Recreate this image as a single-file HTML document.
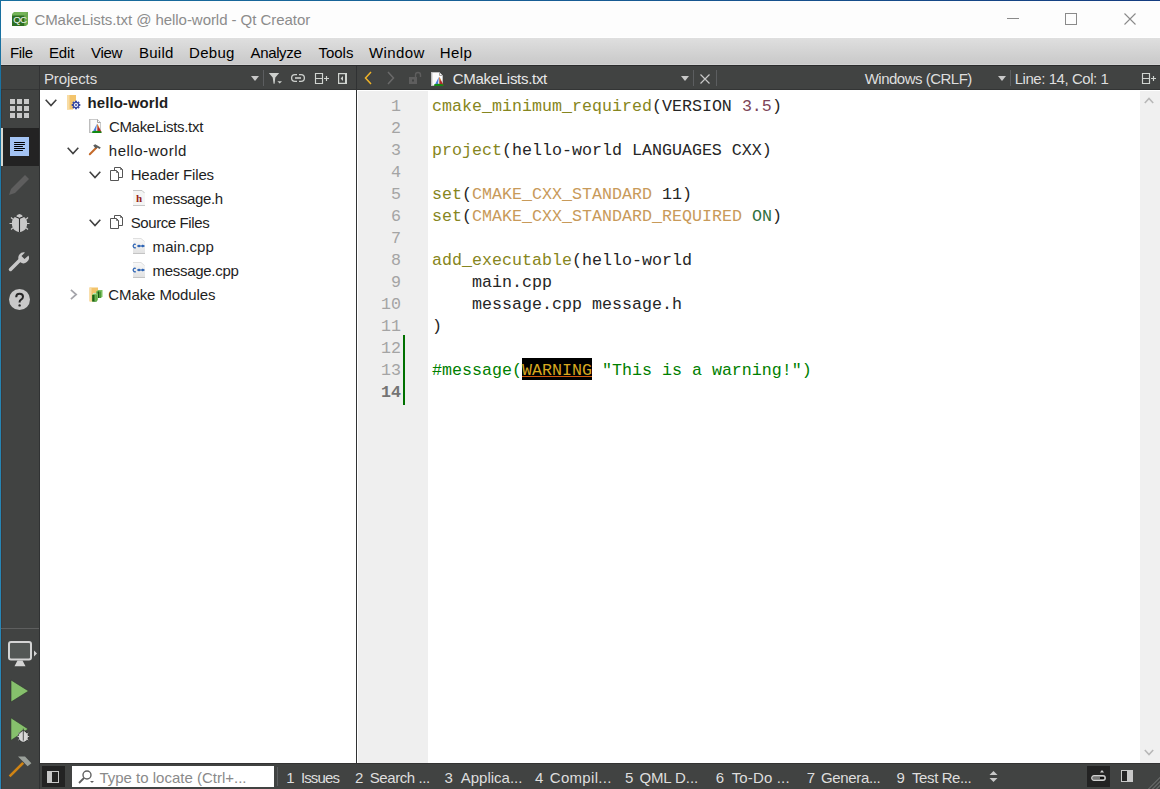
<!DOCTYPE html>
<html><head><meta charset="utf-8">
<style>
*{margin:0;padding:0;box-sizing:border-box}
html,body{width:1160px;height:789px;overflow:hidden;background:#fff;font-family:"Liberation Sans",sans-serif}
.a{position:absolute}
.t{position:absolute;white-space:pre;line-height:1;font-size:15px}
svg{position:absolute;overflow:visible}
#title{left:0;top:0;width:1160px;height:38px;background:#fdfdfd;border-bottom:1px solid #fff}
#menubar{left:0;top:38px;width:1160px;height:27px;background:linear-gradient(#dfdfdf,#c8c8c8)}
#menubar .t{color:#000;top:7px}
#tb{left:0;top:65px;width:1160px;height:25px;background:#414342;border-top:1px solid #2a2b2c;border-bottom:1px solid #333535}
#modebar{left:0;top:90px;width:40px;height:699px;background:#414342;border-right:1px solid #303233}
#tree{left:40px;top:90px;width:316px;height:673px;background:#fff}
#vsep{left:356px;top:66px;width:1px;height:697px;background:#303233}
#gutter{left:358px;top:91px;width:70px;height:672px;background:#efefef}
#editor{left:428px;top:90px;width:712px;height:673px;background:#fff}
#vscroll{left:1140px;top:91px;width:20px;height:672px;background:#f0f0f0}
#status{left:40px;top:763px;width:1120px;height:26px;background:#414342;border-top:1px solid #333}
.code{position:absolute;left:432px;font-family:"Liberation Mono",monospace;font-size:16.67px;white-space:pre;line-height:1;color:#262626}
.ln{position:absolute;left:340px;width:61px;text-align:right;font-family:"Liberation Mono",monospace;font-size:16.67px;white-space:pre;line-height:1;color:#a4a4a4}
.tr{color:#1e1e1e}
.ui{color:#dedede}
.fn{color:#868620}
.var{color:#c89a5a}
.num{color:#7c4458}
.cm{color:#008000}
</style></head><body>
<div class="a" id="title"></div>
<div class="a" style="left:0;top:0;width:1160px;height:1px;background:linear-gradient(to right,#176e9e,#175c94 50%,#143c80)"></div>
<!-- logo -->
<svg style="left:12px;top:12px" width="16" height="14" viewBox="0 0 16 14">
  <path d="M2 0H16V12L14 14H0V2Z" fill="#74b358"/>
  <path d="M0 3.5H12.5V14H0Z" fill="#2d6e21"/>
  <path d="M12.5 3.5L16 0V12L12.5 14Z" fill="#6aa84f"/>
  <text x="7.8" y="11.2" font-family="Liberation Sans" font-size="9.8" fill="#eef4ee" text-anchor="middle" letter-spacing="-0.8">QC</text>
</svg>
<span class="t" style="left:34.4px;top:12px;color:#8c8c8c;letter-spacing:-0.05px">CMakeLists.txt @ hello-world - Qt Creator</span>
<!-- window controls -->
<div class="a" style="left:1007px;top:18px;width:12px;height:1px;background:#8a8a8a"></div>
<div class="a" style="left:1065px;top:13px;width:12px;height:12px;border:1px solid #8a8a8a"></div>
<svg style="left:1124px;top:13px" width="12" height="12" viewBox="0 0 12 12"><path d="M0.5 0.5L11.5 11.5M11.5 0.5L0.5 11.5" stroke="#8a8a8a" stroke-width="1.1"/></svg>

<div class="a" id="menubar">
  <span class="t" style="left:10.0px;letter-spacing:-0.4px">File</span>
  <span class="t" style="left:49.0px;letter-spacing:-0.15px">Edit</span>
  <span class="t" style="left:91.0px;letter-spacing:-0.3px">View</span>
  <span class="t" style="left:139.0px;letter-spacing:0.25px">Build</span>
  <span class="t" style="left:189.0px;letter-spacing:0.3px">Debug</span>
  <span class="t" style="left:250.5px;letter-spacing:-0.35px">Analyze</span>
  <span class="t" style="left:318.4px;letter-spacing:0px">Tools</span>
  <span class="t" style="left:369.0px;letter-spacing:0.4px">Window</span>
  <span class="t" style="left:439.8px;letter-spacing:0.4px">Help</span>
</div>
<div class="a" style="left:0;top:64px;width:1160px;height:1px;background:#d2d2d2"></div>
<div class="a" id="tb"></div>
<div class="a" style="left:39px;top:66px;width:1px;height:24px;background:#323334"></div>
<span class="t ui" style="left:44px;top:71px;letter-spacing:-0.15px">Projects</span>
<!-- panel toolbar icons -->
<svg style="left:251px;top:76px" width="8" height="5"><path d="M0 0H8L4 5Z" fill="#c8c8c8"/></svg>
<div class="a" style="left:263px;top:70px;width:1px;height:16px;background:#5c5e60"></div>
<svg style="left:268px;top:73px" width="15" height="11" viewBox="0 0 15 11"><path d="M0.8 0H11.2L7.3 4.6L6.6 10.8H5.6L4.7 4.6Z" fill="#cdd0cd"/><path d="M9.4 8.2H14L11.7 10.4Z" fill="#cdd0cd"/></svg>
<svg style="left:290px;top:73px" width="16" height="10" viewBox="0 0 16 10"><path d="M7 1.6H5A3.4 3.4 0 0 0 5 8.4H7M9 1.6H11A3.4 3.4 0 0 1 11 8.4H9" fill="none" stroke="#cdd0cd" stroke-width="1.3"/><path d="M5 5H11" stroke="#cdd0cd" stroke-width="1.6"/></svg>
<svg style="left:314px;top:72px" width="16" height="13" viewBox="0 0 16 13"><path d="M1.5 1.5H8.5V11.5H1.5ZM1.5 6.5H8.5M10 6.5H15M12.5 4V9" fill="none" stroke="#d0d4d0" stroke-width="1.15"/></svg>
<svg style="left:338px;top:72px" width="10" height="13" viewBox="0 0 10 13"><path d="M0.6 1.6H8.4V11.4H0.6Z" fill="none" stroke="#d0d4d0" stroke-width="1.2"/><rect x="7" y="1" width="2" height="11" fill="#d0d4d0"/><path d="M5 4V9L2.6 6.5Z" fill="#d0d4d0"/></svg>
<!-- editor toolbar -->
<svg style="left:364px;top:71px" width="8" height="14" viewBox="0 0 8 14"><path d="M7 1L1.5 7L7 13" stroke="#f0b428" stroke-width="1.5" fill="none"/></svg>
<svg style="left:387px;top:71px" width="8" height="14" viewBox="0 0 8 14"><path d="M1 1L6.5 7L1 13" stroke="#6a6a6a" stroke-width="1.5" fill="none"/></svg>
<svg style="left:409px;top:72px" width="13" height="13" viewBox="0 0 13 13"><rect x="0" y="5" width="8" height="7" fill="#5e5e5e"/><rect x="3" y="7.5" width="2" height="2" fill="#414342"/><path d="M6.5 5.5V3A2.5 2.5 0 0 1 11.5 3V5" stroke="#5e5e5e" stroke-width="1.4" fill="none"/></svg>
<svg style="left:428px;top:69px" width="20" height="20" viewBox="0 0 20 20">
  <path d="M3.5 3.5H11.5L14.5 6.5V16.5H3.5Z" fill="#fbfbfb" stroke="#c4c4c4" stroke-width="0.9"/>
  <rect x="3" y="3" width="1.4" height="14" fill="#bdbdbd"/>
  <path d="M11.5 3.5V6.5H14.5" fill="none" stroke="#9a9a9a" stroke-width="0.9"/>
  <path d="M11 7.8L6.6 16.2H9.8Z" fill="#4a7fdc"/>
  <path d="M11.2 7.8L15.8 16.6H11.4Z" fill="#b02c2c"/>
  <path d="M11.1 7.8L11.6 12L13 11Z" fill="#e39a3a"/>
  <path d="M6.2 15.2Q11 14 15.4 15.6V17H6.2Z" fill="#128a12"/>
</svg>
<span class="t ui" style="left:452.8px;top:71px;color:#e8e8e8;letter-spacing:-0.3px">CMakeLists.txt</span>
<svg style="left:681px;top:76px" width="8" height="5"><path d="M0 0H8L4 5Z" fill="#c8c8c8"/></svg>
<div class="a" style="left:693px;top:70px;width:1px;height:16px;background:#5c5e60"></div>
<svg style="left:700px;top:74px" width="10" height="10" viewBox="0 0 10 10"><path d="M0.5 0.5L9.5 9.5M9.5 0.5L0.5 9.5" stroke="#c8c8c8" stroke-width="1.2"/></svg>
<div class="a" style="left:716px;top:70px;width:1px;height:16px;background:#5c5e60"></div>
<span class="t ui" style="left:864.7px;top:71px;letter-spacing:-0.5px">Windows (CRLF)</span>
<svg style="left:998px;top:76px" width="8" height="5"><path d="M0 0H8L4 5Z" fill="#c8c8c8"/></svg>
<div class="a" style="left:1010px;top:70px;width:1px;height:16px;background:#5c5e60"></div>
<span class="t ui" style="left:1014.7px;top:71px;letter-spacing:-0.45px">Line: 14, Col: 1</span>
<svg style="left:1141px;top:72px" width="20" height="13" viewBox="0 0 20 13"><path d="M1.5 1.5H8.5V11.5H1.5ZM1.5 6.5H8.5M10 6.5H15M12.5 4V9" fill="none" stroke="#d0d4d0" stroke-width="1.15"/></svg>

<div class="a" id="modebar"></div>
<div class="a" style="left:1px;top:90px;width:1px;height:699px;background:#3c3a3a"></div>
<!-- mode icons -->
<svg style="left:10px;top:99px" width="19" height="19" viewBox="0 0 19 19" fill="#c8c8c8">
  <rect x="0" y="0" width="5" height="5"/><rect x="7" y="0" width="5" height="5"/><rect x="14" y="0" width="5" height="5"/>
  <rect x="0" y="7" width="5" height="5"/><rect x="7" y="7" width="5" height="5"/><rect x="14" y="7" width="5" height="5"/>
  <rect x="0" y="14" width="5" height="5"/><rect x="7" y="14" width="5" height="5"/><rect x="14" y="14" width="5" height="5"/>
</svg>
<div class="a" style="left:2px;top:128px;width:37px;height:38px;background:#232323"></div>
<div class="a" style="left:1px;top:128px;width:2px;height:38px;background:#d8d8d0"></div>
<svg style="left:10px;top:137px" width="19" height="19" viewBox="0 0 19 19">
  <rect x="0" y="0" width="19" height="19" fill="#a4c4f4"/>
  <path d="M4.5 5.5H14.5M4.5 7.5H14.5M4.5 9.5H12.5M4.5 11.5H14.5M4.5 13.5H12.5" stroke="#000" stroke-width="1" stroke-linecap="round"/>
</svg>
<svg style="left:9px;top:175px" width="21" height="20" viewBox="0 0 21 20"><path d="M16 0L20 4L6 18L0 20L2 14Z" fill="#5e5e5e"/></svg>
<svg style="left:4px;top:206px" width="32" height="32" viewBox="0 0 32 32" fill="#c8c8c8">
  <path d="M11.8 10.6Q15.5 5.2 19.2 10.6L15.5 12.2Z"/>
  <path d="M15.5 12.4L11.6 10.6Q8 12.5 7.8 17.5Q8 23.5 13 25.5L15.5 26.2L18 25.5Q23 23.5 23.2 17.5Q23 12.5 19.4 10.6Z"/>
  <path d="M15.5 12.4V26.2M11.2 10.4L15.5 12.4L19.8 10.4" stroke="#2a2b2c" stroke-width="1.1" fill="none"/>
  <path d="M5.5 17.5H8.5M25.5 17.5H22.5M7 11.5L9 13.2M24 11.5L22 13.2M7 23.5L9 21.8M24 23.5L22 21.8" stroke="#c8c8c8" stroke-width="1.2"/>
</svg>
<svg style="left:9px;top:251px" width="21" height="20" viewBox="0 0 21 20"><path d="M1.5 18.5L11 9" stroke="#c8c8c8" stroke-width="3.5" stroke-linecap="round"/><path d="M10 9.5A5.5 5.5 0 0 1 16 1.5L12.5 5L15.5 8L19.5 4.5A5.5 5.5 0 0 1 11 11Z" fill="#c8c8c8"/></svg>
<svg style="left:9px;top:289px" width="21" height="21" viewBox="0 0 21 21"><circle cx="10.5" cy="10.5" r="10.5" fill="#c8c8c8"/><path d="M7.2 8.2Q7.2 4.8 10.6 4.8Q14 4.8 14 7.8Q14 9.6 11.8 10.8Q10.6 11.5 10.6 13V13.6" fill="none" stroke="#262626" stroke-width="2"/><circle cx="10.6" cy="16.4" r="1.2" fill="#262626"/></svg>
<div class="a" style="left:1px;top:628px;width:38px;height:1px;background:#5e5f5f"></div>
<svg style="left:8px;top:641px" width="30" height="26" viewBox="0 0 30 26">
  <rect x="1" y="1" width="22" height="17.6" rx="2" fill="#535755" stroke="#d4d4d4" stroke-width="2"/>
  <path d="M9.5 19.5H14.5L17.5 25.2H6.5Z" fill="#d4d4d4"/>
  <path d="M26 9.6V15.4L29 12.5Z" fill="#d4d4d4"/>
</svg>
<svg style="left:11px;top:680px" width="18" height="23" viewBox="0 0 18 23"><path d="M0 0L17.6 11L0 22Z" fill="#86c06c" stroke="#2c302c" stroke-width="0.6"/></svg>
<svg style="left:2px;top:712px" width="38" height="70" viewBox="0 0 38 70">
  <path d="M8.9 5.8L26.2 17L8.9 28.4Z" fill="#86c06c" stroke="#2c302c" stroke-width="0.6"/>
  <g transform="translate(21.3 23.5) scale(0.58) translate(-15.5 -15.7)" fill="#2e3030" stroke="#2e3030" stroke-width="3"><path d="M11.8 10.6Q15.5 5.2 19.2 10.6L15.5 12.2Z"/>
  <path d="M15.5 12.4L11.6 10.6Q8 12.5 7.8 17.5Q8 23.5 13 25.5L15.5 26.2L18 25.5Q23 23.5 23.2 17.5Q23 12.5 19.4 10.6Z"/>
  <path d="M5.5 17.5H8.5M25.5 17.5H22.5M7 11.5L9 13.2M24 11.5L22 13.2M7 23.5L9 21.8M24 23.5L22 21.8" stroke-width="1.6"/></g>
  <g transform="translate(21.3 23.5) scale(0.58) translate(-15.5 -15.7)" fill="#d8d8d8" stroke="#d8d8d8"><path d="M11.8 10.6Q15.5 5.2 19.2 10.6L15.5 12.2Z"/>
  <path d="M15.5 12.4L11.6 10.6Q8 12.5 7.8 17.5Q8 23.5 13 25.5L15.5 26.2L18 25.5Q23 23.5 23.2 17.5Q23 12.5 19.4 10.6Z"/>
  <path d="M5.5 17.5H8.5M25.5 17.5H22.5M7 11.5L9 13.2M24 11.5L22 13.2M7 23.5L9 21.8M24 23.5L22 21.8" stroke-width="1.6"/></g>
  <path d="M21.3 16.6V28.6" stroke="#2e3030" stroke-width="0.8"/>
  <path d="M7.6 64.4L21.2 50.8" stroke="#d08414" stroke-width="2.6"/>
  <path d="M16 44.6H23L29.4 51.3L25.6 54.2L21 49.6Z" fill="#9aa09a"/>
</svg>

<div class="a" id="tree"></div>
<!-- tree -->
<svg style="left:45px;top:99px" width="12" height="8" viewBox="0 0 12 8"><path d="M0.7 0.7L6 6.5L11.3 0.7" stroke="#404040" stroke-width="1.6" fill="none"/></svg>
<svg style="left:64px;top:92px" width="20" height="20" viewBox="0 0 20 20">
  <path d="M3 3H12V9.5H9V17.5H3Z" fill="#f3c46c"/><path d="M3 3H5.5V17.5H3Z" fill="#f8dca4"/>
  <g transform="translate(12,13)" fill="#3a4aa2">
    <rect x="-1" y="-4.3" width="2" height="8.6"/><rect x="-4.3" y="-1" width="8.6" height="2"/>
    <rect x="-1" y="-4.3" width="2" height="8.6" transform="rotate(45)"/><rect x="-1" y="-4.3" width="2" height="8.6" transform="rotate(-45)"/>
    <circle r="3.2"/><circle r="2" fill="#fff"/><circle r="1"/>
  </g>
</svg>
<span class="t tr" style="left:87.6px;top:95px;font-weight:bold;letter-spacing:0.05px">hello-world</span>
<svg style="left:86px;top:116px" width="20" height="20" viewBox="0 0 20 20">
  <path d="M3.5 3.5H11.5L14.5 6.5V16.5H3.5Z" fill="#fbfbfb" stroke="#c4c4c4" stroke-width="0.9"/>
  <rect x="3" y="3" width="1.4" height="14" fill="#bdbdbd"/>
  <path d="M11.5 3.5V6.5H14.5" fill="none" stroke="#9a9a9a" stroke-width="0.9"/>
  <path d="M11 7.8L6.6 16.2H9.8Z" fill="#4a7fdc"/>
  <path d="M11.2 7.8L15.8 16.6H11.4Z" fill="#b02c2c"/>
  <path d="M11.1 7.8L11.6 12L13 11Z" fill="#e39a3a"/>
  <path d="M6.2 15.2Q11 14 15.4 15.6V17H6.2Z" fill="#128a12"/>
</svg>
<span class="t tr" style="left:108.9px;top:119px;letter-spacing:-0.3px">CMakeLists.txt</span>
<svg style="left:67px;top:147px" width="12" height="8" viewBox="0 0 12 8"><path d="M0.7 0.7L6 6.5L11.3 0.7" stroke="#404040" stroke-width="1.6" fill="none"/></svg>
<svg style="left:88px;top:144px" width="14" height="12" viewBox="0 0 14 12"><path d="M1.8 10.2L8.5 3.5" stroke="#c46a2a" stroke-width="2" stroke-linecap="round"/><path d="M5.2 1.6L7.2 0.2L12.8 3.4L11.6 5L9 3.6L7.6 4.4Z" fill="#5a5e5e"/></svg>
<span class="t tr" style="left:108.8px;top:143px;letter-spacing:0.5px">hello-world</span>
<svg style="left:89px;top:171px" width="12" height="8" viewBox="0 0 12 8"><path d="M0.7 0.7L6 6.5L11.3 0.7" stroke="#404040" stroke-width="1.6" fill="none"/></svg>
<svg style="left:110px;top:167px" width="14" height="15" viewBox="0 0 14 15"><path d="M4.5 3.5V0.5H10.5L12.5 2.5V10.5H8.5" fill="none" stroke="#555" stroke-width="1"/><path d="M10.5 0.5V2.5H12.5" fill="none" stroke="#555" stroke-width="0.8"/><path d="M0.5 3.5H6.5L8.5 5.5V13.5H0.5Z" fill="#fff" stroke="#555" stroke-width="1"/><path d="M6.5 3.5V5.5H8.5" fill="none" stroke="#555" stroke-width="0.8"/></svg>
<span class="t tr" style="left:130.7px;top:167px;letter-spacing:-0.15px">Header Files</span>
<svg style="left:128px;top:186px" width="24" height="24" viewBox="0 0 24 24"><path d="M5 4H14L17 7V19.5H5Z" fill="#f4f5f4"/><path d="M5 4.5H14L16.5 7" fill="none" stroke="#c4c4c4" stroke-width="1"/><path d="M5 19.5H17" stroke="#c8c8c8" stroke-width="1"/><text x="8" y="16" font-family="Liberation Serif" font-weight="bold" font-size="11" fill="#9a2418">h</text></svg>
<span class="t tr" style="left:152.6px;top:191px;letter-spacing:-0.35px">message.h</span>
<svg style="left:89px;top:219px" width="12" height="8" viewBox="0 0 12 8"><path d="M0.7 0.7L6 6.5L11.3 0.7" stroke="#404040" stroke-width="1.6" fill="none"/></svg>
<svg style="left:110px;top:215px" width="14" height="15" viewBox="0 0 14 15"><path d="M4.5 3.5V0.5H10.5L12.5 2.5V10.5H8.5" fill="none" stroke="#555" stroke-width="1"/><path d="M10.5 0.5V2.5H12.5" fill="none" stroke="#555" stroke-width="0.8"/><path d="M0.5 3.5H6.5L8.5 5.5V13.5H0.5Z" fill="#fff" stroke="#555" stroke-width="1"/><path d="M6.5 3.5V5.5H8.5" fill="none" stroke="#555" stroke-width="0.8"/></svg>
<span class="t tr" style="left:130.7px;top:215px;letter-spacing:-0.4px">Source Files</span>
<svg style="left:128px;top:234px" width="24" height="24" viewBox="0 0 24 24"><defs><linearGradient id="pg234" x1="0" y1="0" x2="0" y2="1"><stop offset="0" stop-color="#fafafa"/><stop offset="1" stop-color="#e0e0e0"/></linearGradient></defs><path d="M5 4H13L17 7.5V20H5Z" fill="url(#pg234)"/><path d="M5 4.5H13L16.5 7.5" fill="none" stroke="#d8d8d8" stroke-width="0.8"/><path d="M5 19.5H17" stroke="#c4c4c4" stroke-width="1"/><path d="M7.8 10.6A1.7 1.7 0 1 0 7.8 13.4" fill="none" stroke="#2a62b4" stroke-width="1.2"/><path d="M9.2 12L11 10.4L12.8 12L11 13.6ZM13 12L14.8 10.4L16.6 12L14.8 13.6Z" fill="#2a62b4"/><path d="M9.2 12H16.6" stroke="#2a62b4" stroke-width="1"/></svg>
<span class="t tr" style="left:152.6px;top:239px;letter-spacing:0.05px">main.cpp</span>
<svg style="left:128px;top:258px" width="24" height="24" viewBox="0 0 24 24"><defs><linearGradient id="pg258" x1="0" y1="0" x2="0" y2="1"><stop offset="0" stop-color="#fafafa"/><stop offset="1" stop-color="#e0e0e0"/></linearGradient></defs><path d="M5 4H13L17 7.5V20H5Z" fill="url(#pg258)"/><path d="M5 4.5H13L16.5 7.5" fill="none" stroke="#d8d8d8" stroke-width="0.8"/><path d="M5 19.5H17" stroke="#c4c4c4" stroke-width="1"/><path d="M7.8 10.6A1.7 1.7 0 1 0 7.8 13.4" fill="none" stroke="#2a62b4" stroke-width="1.2"/><path d="M9.2 12L11 10.4L12.8 12L11 13.6ZM13 12L14.8 10.4L16.6 12L14.8 13.6Z" fill="#2a62b4"/><path d="M9.2 12H16.6" stroke="#2a62b4" stroke-width="1"/></svg>
<span class="t tr" style="left:152.6px;top:263px;letter-spacing:-0.3px">message.cpp</span>
<svg style="left:70px;top:289px" width="8" height="11" viewBox="0 0 8 11"><path d="M0.9 0.9L6.2 5.5L0.9 10.1" stroke="#a4a4aa" stroke-width="1.7" fill="none"/></svg>
<svg style="left:86px;top:284px" width="20" height="20" viewBox="0 0 20 20">
  <path d="M3.5 3.5H12V9H7V17.5H3.5Z" fill="#f3c46c"/><path d="M3.5 3.5H5.5V17H3.5Z" fill="#f8dca4"/>
  <path d="M10.5 7.5L12 6H16.5V12.5L15 14H10.5Z" fill="#7cc262"/><path d="M10.5 7.5H15V14H10.5Z" fill="#4f9a3c"/><path d="M12.5 7.5V14" stroke="#1f5a18" stroke-width="1"/>
  <path d="M6 11L7.5 9.5H12V16L10.5 17.5H6Z" fill="#7cc262"/><path d="M6 11H10.5V17.5H6Z" fill="#2f7a24"/><path d="M8 11V17.5" stroke="#134a10" stroke-width="1.2"/><path d="M8.5 11V17.5H10.5V11Z" fill="#6ab450"/>
</svg>
<span class="t tr" style="left:108.3px;top:287px;letter-spacing:-0.1px">CMake Modules</span>

<div class="a" id="gutter"></div>
<div class="a" id="editor"></div>
<div class="a" id="vscroll"></div>
<svg style="left:1144px;top:97px" width="10" height="7" viewBox="0 0 10 7"><path d="M0.8 6L5 1.5L9.2 6" stroke="#b8b8b8" stroke-width="1.6" fill="none"/></svg>
<svg style="left:1144px;top:749px" width="10" height="7" viewBox="0 0 10 7"><path d="M0.8 1L5 5.5L9.2 1" stroke="#b8b8b8" stroke-width="1.6" fill="none"/></svg>
<div class="a" id="vsep"></div>

<!-- line numbers -->
<div class="ln" style="top:99px">1</div>
<div class="ln" style="top:121px">2</div>
<div class="ln" style="top:143px">3</div>
<div class="ln" style="top:165px">4</div>
<div class="ln" style="top:187px">5</div>
<div class="ln" style="top:209px">6</div>
<div class="ln" style="top:231px">7</div>
<div class="ln" style="top:253px">8</div>
<div class="ln" style="top:275px">9</div>
<div class="ln" style="top:297px">10</div>
<div class="ln" style="top:319px">11</div>
<div class="ln" style="top:341px">12</div>
<div class="ln" style="top:363px">13</div>
<div class="ln" style="top:385px;font-weight:bold;color:#747474">14</div>
<div class="a" style="left:403px;top:335px;width:2px;height:70px;background:#007000"></div>

<!-- code -->
<div class="code" style="top:99px"><span class="fn">cmake_minimum_required</span>(VERSION <span class="num">3.5</span>)</div>
<div class="code" style="top:143px"><span class="fn">project</span>(hello-world LANGUAGES CXX)</div>
<div class="code" style="top:187px"><span class="fn">set</span>(<span class="var">CMAKE_CXX_STANDARD</span> 11)</div>
<div class="code" style="top:209px"><span class="fn">set</span>(<span class="var">CMAKE_CXX_STANDARD_REQUIRED</span> <span style="color:#2f7040">ON</span>)</div>
<div class="code" style="top:253px"><span class="fn">add_executable</span>(hello-world</div>
<div class="code" style="top:275px">    main.cpp</div>
<div class="code" style="top:297px">    message.cpp message.h</div>
<div class="code" style="top:319px">)</div>
<div class="a" style="left:522px;top:358px;width:70px;height:22px;background:#000"></div>
<div class="a" style="left:522px;top:376px;width:70px;height:1px;background:#d05a10"></div>
<div class="code cm" style="top:363px">#message(<span style="color:#d8a820">WARNING</span> "This is a warning!")</div>

<div class="a" id="status"></div>
<div class="a" style="left:39px;top:763px;width:1px;height:26px;background:#303233"></div>
<div class="a" style="left:42px;top:766px;width:23px;height:21px;background:#232323"></div>
<svg style="left:47px;top:771px" width="12" height="12" viewBox="0 0 12 12"><rect x="0.5" y="0.5" width="11" height="11" fill="#232323" stroke="#c8c8c8"/><rect x="0" y="0" width="5" height="12" fill="#c8c8c8"/></svg>
<div class="a" style="left:72px;top:766px;width:202px;height:21px;background:#fff"></div>
<svg style="left:78px;top:770px" width="17" height="14" viewBox="0 0 17 14"><circle cx="9" cy="5" r="4" fill="none" stroke="#606060" stroke-width="1.4"/><path d="M6 8L1 13" stroke="#606060" stroke-width="1.8"/><path d="M12 11H16L14 13Z" fill="#606060"/></svg>
<span class="t" style="left:99.4px;top:770px;color:#8a8a8a">Type to locate (Ctrl+...</span>
<div class="a" style="left:277px;top:767px;width:1px;height:19px;background:#5c5e60"></div>
<span class="t ui" style="left:286.2px;top:770px">1</span><span class="t ui" style="left:300.9px;top:770px;letter-spacing:-0.85px">Issues</span>
<span class="t ui" style="left:354.9px;top:770px">2</span><span class="t ui" style="left:369.7px;top:770px;letter-spacing:-0.4px">Search ...</span>
<span class="t ui" style="left:444.5px;top:770px">3</span><span class="t ui" style="left:460.7px;top:770px;letter-spacing:0px">Applica...</span>
<span class="t ui" style="left:535.0px;top:770px">4</span><span class="t ui" style="left:549.8px;top:770px;letter-spacing:0.3px">Compil...</span>
<span class="t ui" style="left:625.0px;top:770px">5</span><span class="t ui" style="left:639.4px;top:770px;letter-spacing:-0.1px">QML D...</span>
<span class="t ui" style="left:715.7px;top:770px">6</span><span class="t ui" style="left:731.7px;top:770px;letter-spacing:0.15px">To-Do ...</span>
<span class="t ui" style="left:806.8px;top:770px">7</span><span class="t ui" style="left:821px;top:770px;letter-spacing:-0.35px">Genera...</span>
<span class="t ui" style="left:896.5px;top:770px">9</span><span class="t ui" style="left:912px;top:770px;letter-spacing:-0.4px">Test Re...</span>
<svg style="left:989px;top:770px" width="9" height="13" viewBox="0 0 9 13"><path d="M0.5 5L4.5 1L8.5 5ZM0.5 8L4.5 12L8.5 8Z" fill="#c8c8c8"/></svg>
<div class="a" style="left:1087px;top:766px;width:23px;height:21px;background:#232323"></div>
<svg style="left:1091px;top:770px" width="15" height="11" viewBox="0 0 15 11"><path d="M9 2.5H13L11 0Z" fill="#d0d0d0"/><rect x="0.7" y="5.7" width="13.6" height="4.6" rx="2.3" fill="#777" stroke="#d0d0d0" stroke-width="1.2"/><rect x="9" y="7" width="4" height="2" fill="#111"/></svg>
<svg style="left:1121px;top:770px" width="12" height="12" viewBox="0 0 12 12"><rect x="0.5" y="0.5" width="11" height="11" fill="#232323" stroke="#c8c8c8"/><rect x="6" y="0" width="6" height="12" fill="#c8c8c8"/></svg>
<svg style="left:1140px;top:770px" width="20" height="19" viewBox="0 0 20 19"><path d="M8 19.5L20.5 7M12 19.5L20.5 11M16 19.5L20.5 15" stroke="#5e605f" stroke-width="1" shape-rendering="crispEdges"/></svg>
<div class="a" style="left:0;top:0;width:1px;height:789px;background:linear-gradient(#176e9e,#2685b2 50%,#2888ba)"></div>
</body></html>
